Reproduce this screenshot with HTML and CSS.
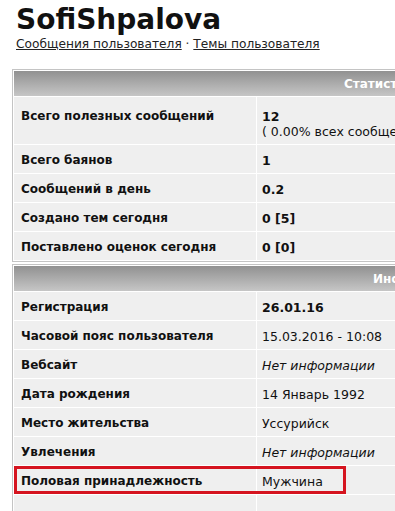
FILE: index.html
```html
<!DOCTYPE html>
<html lang="ru">
<head>
    <meta charset="UTF-8">
    <meta name="viewport" content="width=device-width, initial-scale=1.0">
    <title>SofiShpalova</title>
    <link rel="stylesheet" href="styles.css">
</head>
<body>
    <div class="page">
        <div class="profile-head">
            <h1>SofiShpalova</h1>
            <div class="user-links">
                <a href="#">Сообщения пользователя</a> · <a href="#">Темы пользователя</a>
            </div>
        </div>

        <table class="info-table">
            <tr>
                <th colspan="2" class="head head-stats">Статистика</th>
            </tr>
            <tr class="first-row">
                <td class="label">Всего полезных сообщений</td>
                <td class="value"><b>12</b><br>( 0.00% всех сообщений )</td>
            </tr>
            <tr>
                <td class="label">Всего баянов</td>
                <td class="value"><b>1</b></td>
            </tr>
            <tr>
                <td class="label">Сообщений в день</td>
                <td class="value"><b>0.2</b></td>
            </tr>
            <tr>
                <td class="label">Создано тем сегодня</td>
                <td class="value"><b>0 [5]</b></td>
            </tr>
            <tr>
                <td class="label">Поставлено оценок сегодня</td>
                <td class="value"><b>0 [0]</b></td>
            </tr>
        </table>

        <table class="info-table">
            <tr>
                <th colspan="2" class="head head-info">Информация</th>
            </tr>
            <tr>
                <td class="label">Регистрация</td>
                <td class="value"><b>26.01.16</b></td>
            </tr>
            <tr>
                <td class="label">Часовой пояс пользователя</td>
                <td class="value">15.03.2016 - 10:08</td>
            </tr>
            <tr>
                <td class="label">Вебсайт</td>
                <td class="value"><i>Нет информации</i></td>
            </tr>
            <tr>
                <td class="label">Дата рождения</td>
                <td class="value">14 Январь 1992</td>
            </tr>
            <tr>
                <td class="label">Место жительства</td>
                <td class="value">Уссурийск</td>
            </tr>
            <tr>
                <td class="label">Увлечения</td>
                <td class="value"><i>Нет информации</i></td>
            </tr>
            <tr class="marked">
                <td class="label">Половая принадлежность</td>
                <td class="value">Мужчина</td>
            </tr>
            <tr>
                <td class="label">&nbsp;</td>
                <td class="value">&nbsp;</td>
            </tr>
        </table>
    </div>
</body>
</html>
```

FILE: styles.css
```css
body {
    margin: 0;
    font-family: "DejaVu Sans", Verdana, sans-serif;
    font-size: 12.5px;
    color: #111;
    background: #fff;
    overflow: hidden;
}
.page {
    padding: 4px 0 0 12px;
    width: 760px;
}
.profile-head {
    padding-left: 4px;
    margin-bottom: 18px;
}
h1 {
    margin: 0;
    font-size: 28px;
    line-height: 32px;
    font-weight: bold;
    color: #111;
}
.user-links {
    margin-top: 1px;
    font-size: 12.2px;
    color: #333;
}
.user-links a {
    color: #222;
    text-decoration: underline;
}
.info-table {
    width: 760px;
    border: 1px solid #c4c4c4;
    border-spacing: 1px;
    background: #fff;
    margin-bottom: 2px;
}
.head {
    height: 25px;
    padding: 0;
    background: linear-gradient(#919191, #c6c6c6);
    color: #fff;
    font-size: 12px;
    font-weight: bold;
    text-align: left;
}
.head-stats {
    padding-left: 330px;
}
.head-info {
    padding-left: 359px;
}
.info-table td {
    background: #efefef;
    padding: 8px 7px 5px;
    line-height: 15px;
    vertical-align: top;
}
.info-table td.label {
    width: 228px;
    font-size: 12px;
    font-weight: bold;
}
.info-table td.value {
    padding-left: 5px;
}
.info-table td.value b {
    font-size: 12.5px;
}
.first-row td {
    padding-top: 12px;
}
.marked td.label {
    position: relative;
}
/* red annotation frame drawn over the row */
.marked td.label::after {
    content: "";
    position: absolute;
    left: 0;
    top: 0;
    bottom: 0;
    width: 332px;
    border: 3px solid #d5141f;
    box-sizing: border-box;
    pointer-events: none;
}
```
